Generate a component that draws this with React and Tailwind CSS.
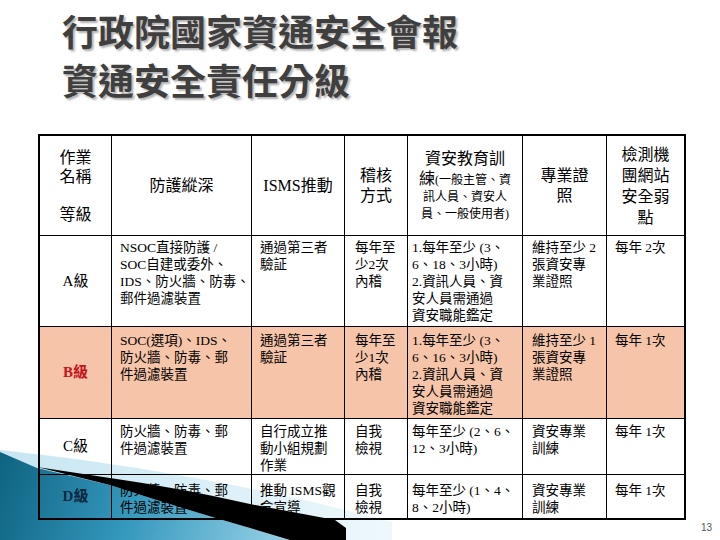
import React from "react";

const FONT = "font-['Liberation_Serif','Noto_Sans_CJK_TC',serif]";

const colPad = ["", "pl-[8px]", "pl-[8px]", "pl-[10px]", "pl-[4px]", "pl-[9px]", "pl-[8px]"];

const rows = [
  {
    label: "A級",
    labelCls: "text-black",
    bg: "",
    pt: "pt-[3px]",
    cells: [
      ["NSOC直接防護 /", "SOC自建或委外、", "IDS、防火牆、防毒、", "郵件過濾裝置"],
      ["通過第三者", "驗証"],
      ["每年至", "少2次", "內稽"],
      ["1.每年至少 (3、", "6、18、3小時)", "2.資訊人員、資", "安人員需通過", "資安職能鑑定"],
      ["維持至少 2", "張資安專", "業證照"],
      ["每年 2次"],
    ],
  },
  {
    label: "B級",
    labelCls: "text-[#c3161c] font-bold",
    bg: "bg-[#f6c4a8]",
    pt: "pt-[5px]",
    cells: [
      ["SOC(選項)、IDS、", "防火牆、防毒、郵", "件過濾裝置"],
      ["通過第三者", "驗証"],
      ["每年至", "少1次", "內稽"],
      ["1.每年至少 (3、", "6、16、3小時)", "2.資訊人員、資", "安人員需通過", "資安職能鑑定"],
      ["維持至少 1", "張資安專", "業證照"],
      ["每年 1次"],
    ],
  },
  {
    label: "C級",
    labelCls: "text-black",
    bg: "",
    pt: "pt-[4px]",
    cells: [
      ["防火牆、防毒、郵", "件過濾裝置"],
      ["自行成立推", "動小組規劃", "作業"],
      ["自我", "檢視"],
      ["每年至少 (2、6、", "12、3小時)"],
      ["資安專業", "訓練"],
      ["每年 1次"],
    ],
  },
  {
    label: "D級",
    labelCls: "text-[#0d2740] font-bold",
    bg: "",
    pt: "pt-[7px]",
    cells: [
      ["防火牆、防毒、郵", "件過濾裝置"],
      ["推動 ISMS觀", "念宣導"],
      ["自我", "檢視"],
      ["每年至少 (1、4、", "8、2小時)"],
      ["資安專業", "訓練"],
      ["每年 1次"],
    ],
  },
];

function Lines({ lines, cls = "" }) {
  return (
    <>
      {lines.map((l, i) => (
        <div key={i} className={`whitespace-nowrap ${cls}`}>
          {l === "" ? "\u00a0" : l}
        </div>
      ))}
    </>
  );
}

export default function App() {
  const hdr = "border-r border-b border-black flex flex-col items-center justify-center text-center text-[16px]";
  return (
    <div className="relative w-[720px] h-[540px] overflow-hidden bg-white">
      {/* background swoosh (behind table) */}
      <svg className="absolute left-0 top-0 z-0" width="720" height="540" viewBox="0 0 720 540">
        <defs>
          <linearGradient id="light" x1="0" y1="0" x2="1" y2="0">
            <stop offset="0" stopColor="#c6e6f2" />
            <stop offset="1" stopColor="#eef8fc" />
          </linearGradient>
          <linearGradient id="teal" x1="0" y1="455" x2="300" y2="540" gradientUnits="userSpaceOnUse">
            <stop offset="0" stopColor="#0e6381" />
            <stop offset="0.45" stopColor="#3598bd" />
            <stop offset="1" stopColor="#9fd6ea" />
          </linearGradient>
        </defs>
        <path d="M0,450 C150,466 280,492 392,522 L392,540 L0,540 Z" fill="url(#light)" />
        <path d="M0,452 L37,468 L110,485 Q180,508 250,528 L290,540 L0,540 Z" fill="url(#teal)" />
      </svg>

      <div className="relative z-10 flex flex-col">
        <div className="pt-[6px] pl-[62px] font-['Noto_Sans_CJK_TC',sans-serif] font-bold text-[36px] leading-[49px] text-[#3f3f3f] [text-shadow:2px_2px_2px_rgba(0,0,0,0.3)]">
          <div className="whitespace-nowrap">行政院國家資通安全會報</div>
          <div className="whitespace-nowrap">資通安全責任分級</div>
        </div>

        <div
          className={`ml-[38px] mt-[30px] w-[648px] border-2 border-black grid grid-cols-[72px_140px_93px_63px_115px_84px_77px] grid-rows-[100px_91px_92px_56px_43px] ${FONT} text-black`}
        >
          {/* header */}
          <div className={`${hdr} text-[15px] leading-[19px]`}>
            <Lines lines={["作業", "名稱", "", "等級"]} />
          </div>
          <div className={`${hdr} leading-[20px]`}>防護縱深</div>
          <div className={`${hdr} leading-[20px]`}>ISMS推動</div>
          <div className={`${hdr} leading-[20px]`}>
            <Lines lines={["稽核", "方式"]} />
          </div>
          <div className={`${hdr}`}>
            <div className="whitespace-nowrap leading-[22px] text-[16px]">資安教育訓</div>
            <div className="whitespace-nowrap leading-[17px] text-[12px]">
              <span className="text-[16px]">練</span>(一般主管、資
            </div>
            <div className="whitespace-nowrap leading-[17px] text-[12px]">訊人員、資安人</div>
            <div className="whitespace-nowrap leading-[17px] text-[12px]">員、一般使用者)</div>
          </div>
          <div className={`${hdr} leading-[20px]`}>
            <Lines lines={["專業證", "照"]} />
          </div>
          <div className="border-b border-black flex flex-col items-center justify-center text-center text-[16px] leading-[21px]">
            <Lines lines={["檢測機", "團網站", "安全弱", "點"]} />
          </div>

          {/* body */}
          {rows.map((r, ri) => {
            const last = ri === rows.length - 1;
            const bb = last ? "" : "border-b";
            return (
              <React.Fragment key={ri}>
                <div className={`border-r ${bb} border-black ${r.bg} flex items-center justify-center text-[15px] ${r.labelCls}`}>
                  {r.label}
                </div>
                {r.cells.map((c, ci) => (
                  <div
                    key={ci}
                    className={`${ci === 5 ? "" : "border-r"} ${bb} border-black ${r.bg} ${colPad[ci + 1]} ${r.pt} text-[13.5px] leading-[17px]`}
                  >
                    <Lines lines={c} />
                  </div>
                ))}
              </React.Fragment>
            );
          })}
        </div>
      </div>

      {/* black wedge (over table) */}
      <svg className="absolute left-0 top-0 z-20 pointer-events-none" width="720" height="540" viewBox="0 0 720 540">
        <path
          d="M37,467 L110,478 Q180,488 250,504 L335,520 L346,528 L346,540 L290,540 L250,528 Q180,508 110,485 Z"
          fill="#000"
        />
      </svg>

      <div className="absolute z-20 left-[701px] top-[522px] text-[10px] leading-[12px] text-[#555] font-['Liberation_Sans',sans-serif]">
        13
      </div>
    </div>
  );
}
